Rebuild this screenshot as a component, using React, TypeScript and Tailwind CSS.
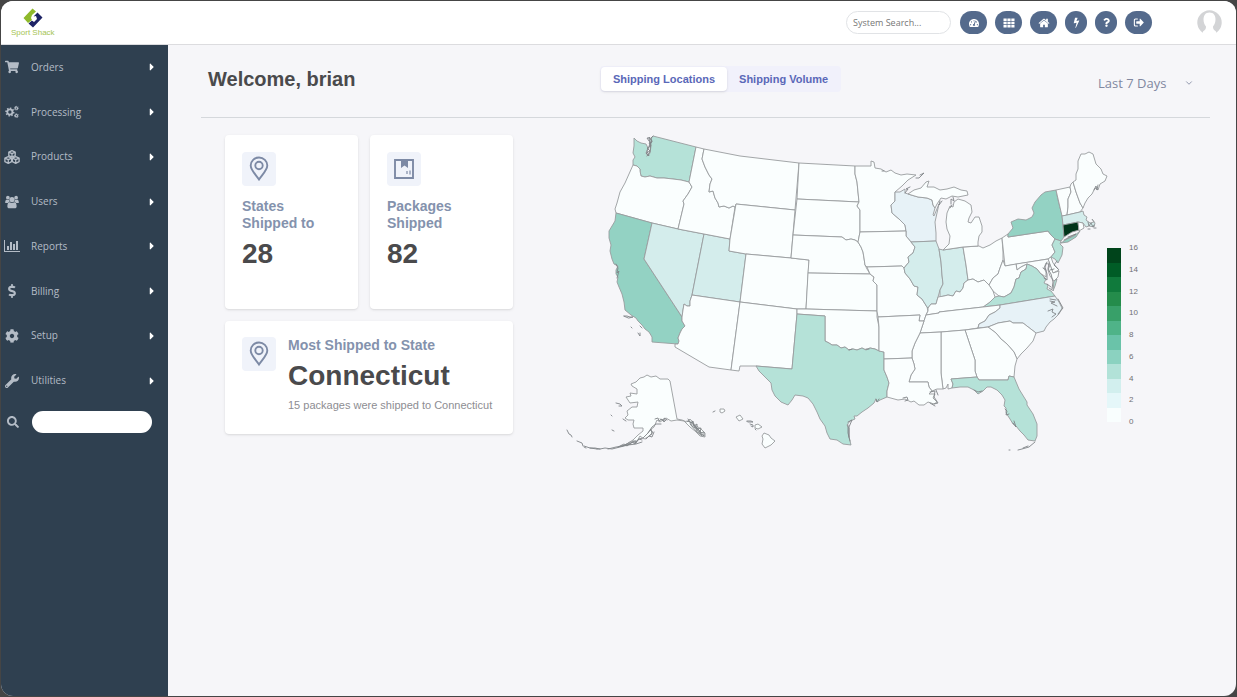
import { useState } from "react";
import type { ComponentType, ReactNode } from "react";
import {
  FaCaretRight,
  FaCog,
  FaDollarSign,
  FaQuestion,
  FaSearch,
  FaShoppingCart,
  FaTachometerAlt,
  FaWrench,
} from "react-icons/fa";
import { FiChevronDown } from "react-icons/fi";

interface IconProps {
  size?: number;
}

interface MenuItem {
  label: string;
  icon: ComponentType<IconProps>;
}

interface StateShape {
  id: string;
  fill?: string;
  points: string;
}

function Gear({ x, y, r, hole }: { x: number; y: number; r: number; hole: number }) {
  const ring = r - hole;
  return (
    <>
      <circle cx={x} cy={y} r={hole + ring / 2 - 0.2} strokeWidth={ring} />
      <circle cx={x} cy={y} r={r} strokeWidth={ring} pathLength={32} strokeDasharray="2 2" />
    </>
  );
}

function CogsIcon({ size = 14 }: IconProps) {
  return (
    <svg width={size} height={size} viewBox="0 0 16 16" fill="none" stroke="currentColor" aria-hidden="true">
      <Gear x={5.6} y={8} r={4.2} hole={2.1} />
      <Gear x={13} y={3.6} r={2.1} hole={0.9} />
      <Gear x={13} y={12.2} r={2.1} hole={0.9} />
    </svg>
  );
}

function CubesIcon({ size = 14 }: IconProps) {
  return (
    <svg width={size} height={size} viewBox="0 0 18 16" fill="none" stroke="currentColor" strokeWidth="1.500" strokeLinejoin="round" aria-hidden="true">
      <path d="M9 .9 12.600 2.500v4L9 8.200 5.400 6.500v-4zM5.400 2.500 9 4.200l3.600-1.700M9 4.200v4" />
      <path d="M4.800 7.700 8.600 9.300v4l-3.800 1.800L1 13.300v-4zM1 9.300 4.800 11l3.800-1.700M4.800 11v4" />
      <path d="M13.200 7.700 17 9.300v4l-3.800 1.800-3.800-1.800v-4zM9.400 9.300l3.800 1.700L17 9.300M13.200 11v4" />
    </svg>
  );
}

function UsersIcon({ size = 14 }: IconProps) {
  return (
    <svg width={size} height={size} viewBox="0 0 16 15" fill="currentColor" aria-hidden="true">
      <circle cx="3.300" cy="2.500" r="2.100" />
      <circle cx="12.700" cy="2.500" r="2.100" />
      <circle cx="8" cy="4.700" r="3" />
      <path d="M.2 8.300C.2 6 .8 4.800 1.900 4.800c.8.600 1.800.7 2.700.3.100 1 .4 1.700.9 2.300-1 .1-1.800.6-2.300 1.300H1C.5 8.700.2 8.600.2 8.300z" />
      <path d="M15.800 8.300c0-2.300-.6-3.500-1.700-3.500-.8.600-1.800.7-2.700.3-.1 1-.4 1.700-.9 2.300 1 .1 1.800.6 2.300 1.300H15c.5 0 .8-.1.800-.4z" />
      <path d="M2.700 12.500c0-2.900.9-4.700 2.700-4.700 1.600 1.200 3.600 1.200 5.200 0 1.800 0 2.700 1.800 2.700 4.700 0 1.300-.8 2-2 2H4.700c-1.200 0-2-.7-2-2z" />
    </svg>
  );
}

function BarChartIcon({ size = 14 }: IconProps) {
  return (
    <svg width={size} height={size} viewBox="0 0 2048 1792" fill="currentColor" aria-hidden="true">
      <path d="M640 896v512h-256v-512h256zm384-512v1024h-256v-1024h256zm1024 1152v128h-2048v-1536h128v1408h1920zm-640-896v768h-256v-768h256zm384-384v1152h-256v-1152h256z" />
    </svg>
  );
}

function GridIcon({ size = 12 }: IconProps) {
  return (
    <svg width={size} height={size} viewBox="0 0 12 12" fill="currentColor" aria-hidden="true">
      <path d="M.5 1.500h3.200v2.500H.5zM4.400 1.500h3.200v2.500H4.400zM8.300 1.500h3.200v2.500H8.300zM.5 4.800h3.200v2.500H.5zM4.400 4.800h3.200v2.500H4.400zM8.300 4.800h3.200v2.500H8.300zM.5 8.100h3.200v2.500H.5zM4.400 8.100h3.200v2.500H4.400zM8.300 8.100h3.200v2.500H8.300z" />
    </svg>
  );
}

function HomeIcon({ size = 11 }: IconProps) {
  return (
    <svg width={size} height={size} viewBox="0 0 1792 1792" fill="currentColor" aria-hidden="true">
      <path d="M1472 992v480q0 26-19 45t-45 19h-384v-384h-256v384h-384q-26 0-45-19t-19-45v-480q0-1 .5-3t.5-3l575-474 575 474q1 2 1 6zm223-69l-62 74q-8 9-21 11h-3q-13 0-21-7l-692-577-692 577q-12 8-24 7-13-2-21-11l-62-74q-8-10-7-23.500t11-21.500l719-599q32-26 76-26t76 26l244 204v-195q0-14 9-23t23-9h192q14 0 23 9t9 23v408l219 182q10 8 11 21.500t-7 23.500z" />
    </svg>
  );
}

function BoltIcon({ size = 11 }: IconProps) {
  return (
    <svg width={size} height={size} viewBox="0 0 1792 1792" fill="currentColor" aria-hidden="true">
      <path d="M1333 566q18 20 7 44l-540 1157q-13 25-42 25-4 0-14-2-17-5-25.500-19t-4.500-30l197-808-406 101q-4 1-12 1-18 0-31-11-18-15-13-39l201-825q4-16 14.500-25.500t25.500-9.500h328q19 0 32 12.500t13 29.500q0 8-5 18l-171 463 396-98q8-2 12-2 19 0 34 15z" />
    </svg>
  );
}

function SignOutIcon({ size = 11 }: IconProps) {
  return (
    <svg width={size} height={size} viewBox="0 0 12 12" fill="currentColor" aria-hidden="true">
      <path d="M4.800 2.200H2.600C1.900 2.200 1.500 2.600 1.500 3.300v5.400c0 .7.400 1.100 1.100 1.100h2.200" fill="none" stroke="currentColor" strokeWidth="1.200" strokeLinecap="round" />
      <path d="M4 4.600h3.300V2.200c0-.4.400-.5.700-.2l3.600 3.600c.2.200.2.600 0 .8L8 10c-.3.300-.7.200-.7-.2V7.400H4c-.3 0-.5-.2-.5-.5V5.100c0-.3.200-.5.500-.5z" />
    </svg>
  );
}

const MENU_ITEMS: MenuItem[] = [
  { label: "Orders", icon: FaShoppingCart },
  { label: "Processing", icon: CogsIcon },
  { label: "Products", icon: CubesIcon },
  { label: "Users", icon: UsersIcon },
  { label: "Reports", icon: BarChartIcon },
  { label: "Billing", icon: FaDollarSign },
  { label: "Setup", icon: FaCog },
  { label: "Utilities", icon: FaWrench },
];

const HEADER_BUTTONS = [
  { label: "Dashboard", icon: FaTachometerAlt, size: 10, width: "w-[27px]" },
  { label: "Apps", icon: GridIcon, size: 12, width: "w-[27px]" },
  { label: "Home", icon: HomeIcon, size: 12, width: "w-[27px]" },
  { label: "Quick actions", icon: BoltIcon, size: 11, width: "w-[22px]" },
  { label: "Help", icon: FaQuestion, size: 9, width: "w-[22px]" },
  { label: "Sign out", icon: SignOutIcon, size: 11, width: "w-[27px]" },
];

const TABS = ["Shipping Locations", "Shipping Volume"];

const LEGEND_LABELS = [16, 14, 12, 10, 8, 6, 4, 2, 0];
const LEGEND_STEPS = [
  "bg-[#00441b]",
  "bg-[#005c26]",
  "bg-[#107a3c]",
  "bg-[#248c4b]",
  "bg-[#38a069]",
  "bg-[#4fb388]",
  "bg-[#6ac3a9]",
  "bg-[#8bd2c0]",
  "bg-[#b2e2d8]",
  "bg-[#d2efee]",
  "bg-[#e5f7f9]",
  "bg-[#f9fefe]",
];

// fill by shipped volume
const NONE = "#fafefe";
const FEW = "#e7f2f7";
const LOW = "#d4edec";
const MID = "#b5e2d8";
const HIGH = "#93d2c3";
const TOP = "#00351a";

const STATES: StateShape[] = [
  { id: "WA", fill: MID, points: "634,138 637,141 641,143 646,144 648,148 646,153 648,156 650,153 651,146 650,140 653,136 696,147 689,182 681,180 673,179 664,178 657,178 650,176 645,177 641,176 640,171 640,169 637,166 633,165 633,160 635,157 633,153 634,146" },
  { id: "OR", points: "633,165 637,166 640,169 640,171 641,176 645,177 650,176 657,178 664,178 673,179 681,180 689,182 692,187 688,194 683,201 684,204 678,229 652,223 616,213 615,209 617,203 620,192 625,183 629,174" },
  { id: "CA", fill: HIGH, points: "616,213 652,223 644,259 682,317 682,321 685,326 682,329 680,333 678,338 679,341 678,344 652,342 652,337 649,332 645,329 642,325 638,321 636,318 631,315 625,310 624,302 622,294 619,287 617,282 618,277 616,274 616,270 618,266 614,264 612,259 610,251 611,245 609,238 609,231 612,226 615,221" },
  { id: "NV", fill: LOW, points: "652,223 678,229 704,234 692,295 690,301 690,306 687,306 684,304 683,310 682,317 644,259" },
  { id: "UT", fill: LOW, points: "704,234 730,239 729,251 746,254 740,302 692,295" },
  { id: "AZ", points: "692,295 740,302 731,370 709,367 675,347 675,344 678,344 679,341 678,338 680,333 682,329 685,326 682,321 682,317 683,310 684,304 687,306 690,306 690,301" },
  { id: "ID", points: "696,147 704,149 702,159 705,167 709,175 712,179 710,184 709,192 713,191 715,198 718,203 719,207 724,206 729,208 733,206 735,207 730,239 704,234 678,229 684,204 683,201 688,194 692,187 689,182" },
  { id: "MT", points: "704,149 740,156 799,163 795,210 736,204 735,207 733,206 729,208 724,206 719,207 718,203 715,198 713,191 709,192 710,184 712,179 709,175 705,167 702,159" },
  { id: "WY", points: "736,204 795,210 791,258 746,254 729,251 730,239" },
  { id: "CO", points: "746,254 791,258 809,260 806,309 797,309 740,302" },
  { id: "NM", points: "740,302 797,309 797,314 792,369 756,366 740,366 739,371 731,370" },
  { id: "ND", points: "799,163 855,166 855,174 857,182 858,192 859,202 797,199" },
  { id: "SD", points: "797,199 859,202 857,206 860,210 860,232 859,237 858,242 855,240 851,239 846,240 842,237 793,235" },
  { id: "NE", points: "793,235 842,237 846,240 851,239 855,240 858,242 861,247 863,252 864,258 865,265 867,269 870,274 808,273 809,260 791,258" },
  { id: "KS", points: "808,273 870,274 874,277 873,281 877,285 877,311 806,309" },
  { id: "OK", points: "797,309 806,309 877,311 877,317 879,327 879,351 875,349 870,348 866,350 862,348 857,350 853,349 849,350 845,347 841,348 837,345 832,345 829,343 825,341 825,316 797,314" },
  { id: "TX", fill: MID, points: "797,314 825,316 825,341 829,343 832,345 837,345 841,348 845,347 849,350 853,349 857,350 862,348 866,350 870,348 875,349 879,351 884,352 884,370 887,377 889,383 887,391 887,397 880,400 877,402 876,399 874,403 868,408 862,412 857,416 854,416 855,419 850,421 847,425 849,428 849,437 851,445 843,444 837,440 830,439 827,433 825,426 820,419 817,412 813,404 808,398 803,396 795,395 792,400 788,405 781,402 775,396 772,390 771,383 764,376 759,371 756,366 792,369" },
  { id: "MN", points: "855,166 871,166 871,161 874,162 875,168 881,169 886,172 891,170 895,173 901,175 907,174 916,175 908,180 902,186 895,192 895,201 891,205 892,213 899,219 905,225 906,231 860,232 860,210 857,206 859,202 858,192 857,182 855,174" },
  { id: "WI", fill: FEW, points: "895,192 900,192 905,189 905,193 908,194 918,197 927,198 932,200 933,205 935,208 933,215 934,216 939,204 937,213 935,222 936,233 936,241 911,242 906,236 906,231 905,225 899,219 892,213 891,205 895,201" },
  { id: "IA", points: "860,232 906,231 906,236 911,242 915,247 913,253 908,257 909,262 904,268 902,266 867,267 865,265 864,258 863,252 861,247 858,242 859,237" },
  { id: "MO", points: "867,267 902,266 904,268 905,273 910,279 914,286 918,287 917,295 922,299 927,307 928,311 926,315 924,321 919,321 920,315 878,317 877,311 877,285 873,281 874,277 870,274" },
  { id: "IL", fill: LOW, points: "911,242 936,241 939,249 941,262 942,275 943,284 940,290 938,297 936,304 931,304 928,308 927,307 922,299 917,295 918,287 914,286 910,279 905,273 904,268 909,262 908,257 913,253 915,247" },
  { id: "IN", fill: LOW, points: "939,249 943,250 963,247 966,265 968,280 964,283 963,288 960,292 956,291 953,296 948,295 944,296 940,297 940,290 943,284 942,275 941,262" },
  { id: "OH", points: "963,247 979,246 983,248 990,245 996,241 1002,238 1003,252 1003,260 1000,268 998,274 993,278 989,285 984,280 978,282 973,279 968,280 966,265" },
  { id: "MI", points: "943,250 949,244 950,236 947,229 946,222 947,213 950,206 953,207 954,202 958,199 965,201 971,205 972,212 969,218 968,222 971,223 975,217 979,217 982,226 982,232 979,236 978,242 978,246 963,247" },
  { id: "MI-upper", points: "908,194 914,190 921,188 926,182 929,181 927,187 934,187 940,190 947,189 954,187 961,190 967,191 968,195 958,197 952,196 946,199 941,198 937,204 935,208 933,205 932,200 927,198 918,197" },
  { id: "PA", points: "1002,238 1008,234 1008,237 1048,231 1051,235 1055,239 1052,245 1055,252 1051,257 1048,259 1005,266" },
  { id: "NY", fill: HIGH, points: "1008,237 1008,234 1013,228 1011,222 1018,219 1026,220 1032,217 1034,213 1032,208 1035,202 1041,195 1045,192 1056,190 1058,200 1062,215 1063,225 1064,237 1061,241 1055,239 1051,235 1048,231" },
  { id: "NY-island", fill: HIGH, points: "1061,243 1067,239 1074,236 1080,231 1076,237 1068,242" },
  { id: "VT", points: "1056,190 1070,187 1071,192 1068,199 1068,207 1067,215 1062,216" },
  { id: "NH", points: "1070,187 1071,184 1073,182 1076,192 1080,203 1083,208 1080,212 1067,215 1068,207 1068,199 1071,192" },
  { id: "ME", points: "1073,182 1076,180 1076,174 1078,169 1078,161 1081,154 1085,154 1089,152 1093,154 1096,164 1101,169 1103,174 1107,176 1105,181 1100,184 1098,190 1095,188 1092,194 1088,198 1085,203 1083,208 1080,203 1076,192" },
  { id: "MA", fill: LOW, points: "1062,216 1067,215 1080,212 1083,211 1084,215 1087,217 1086,220 1090,223 1094,222 1092,219 1095,223 1094,227 1089,226 1086,227 1083,223 1078,222 1063,225" },
  { id: "CT", fill: TOP, points: "1063,225 1078,222 1079,230 1072,232 1064,237" },
  { id: "RI", points: "1078,222 1083,223 1084,228 1079,231" },
  { id: "NJ", fill: MID, points: "1055,239 1061,241 1060,244 1063,247 1062,255 1058,263 1055,259 1051,257 1055,252 1052,245" },
  { id: "DE", points: "1048,259 1051,257 1053,263 1059,270 1053,273" },
  { id: "MD", points: "1016,264 1048,259 1053,273 1059,271 1058,277 1054,281 1050,276 1048,270 1050,265 1046,263 1044,268 1046,272 1046,277 1040,273 1037,269 1032,266 1027,264 1021,267 1017,270" },
  { id: "WV", points: "1003,260 1005,266 1016,264 1017,270 1021,267 1027,264 1026,269 1021,272 1019,278 1016,279 1014,287 1011,293 1004,297 999,296 993,291 989,285 993,278 998,274 1000,268" },
  { id: "VA", fill: MID, points: "1027,264 1032,266 1037,269 1040,273 1046,279 1044,283 1048,285 1047,289 1051,291 1055,296 1000,305 983,307 990,302 995,297 999,296 1004,297 1011,293 1014,287 1016,279 1019,278 1021,272 1026,269" },
  { id: "VA-shore", fill: MID, points: "1054,281 1057,279 1055,286 1053,291" },
  { id: "KY", points: "928,308 931,304 936,304 938,297 944,296 948,295 953,296 956,291 960,292 963,288 964,283 968,280 973,279 978,282 984,280 989,285 993,291 995,297 990,302 983,307 939,312 939,313 926,315 928,311" },
  { id: "TN", points: "926,315 939,313 939,312 983,307 1000,305 1000,308 995,312 989,315 985,321 979,324 978,328 965,330 941,332 920,333 922,327 924,321" },
  { id: "NC", fill: FEW, points: "1000,305 1055,296 1059,302 1062,308 1059,314 1054,319 1050,322 1046,327 1044,331 1036,333 1023,323 1013,323 1010,321 998,323 988,327 978,328 979,324 985,321 989,315 995,312 1000,308" },
  { id: "SC", points: "988,327 998,323 1010,321 1013,323 1023,323 1036,333 1033,341 1027,348 1021,354 1017,359 1014,352 1007,344 1001,339 996,333" },
  { id: "GA", points: "965,330 988,327 996,333 1001,339 1007,344 1014,352 1017,359 1015,366 1014,377 1009,376 1008,380 979,380 977,377 975,371 975,360" },
  { id: "AL", points: "941,332 965,330 975,360 975,371 977,377 951,379 953,384 952,388 948,389 948,384 946,388 943,389 941,373" },
  { id: "MS", points: "920,333 941,332 941,373 943,389 937,389 932,391 929,387 928,382 909,382 911,375 915,369 914,364 912,358 912,351 915,343" },
  { id: "FL", fill: MID, points: "951,379 977,377 979,380 1008,380 1009,376 1014,377 1019,389 1027,402 1027,405 1033,414 1037,424 1037,436 1035,441 1028,440 1024,435 1020,431 1016,426 1013,424 1010,419 1006,413 1006,408 1004,406 1005,400 1002,395 997,390 991,387 987,387 983,391 978,394 974,390 968,387 960,387 952,388 953,384" },
  { id: "AR", points: "878,317 920,315 919,321 924,321 922,327 920,333 915,343 912,351 912,358 884,359 884,352 879,351 879,327" },
  { id: "LA", points: "884,359 912,358 914,364 915,369 911,375 909,382 928,382 929,387 932,391 929,394 935,394 933,398 937,402 934,404 928,402 924,405 919,405 914,401 911,402 905,399 898,400 887,397 887,391 889,383 887,377 884,370" },
  { id: "AK", points: "640,378 644,377 647,375 651,377 656,376 660,379 668,379 670,381 677,419 682,420 687,422 690,419 695,425 701,429 705,433 705,437 700,436 695,431 690,427 684,421 677,420 671,421 666,418 660,422 657,420 654,427 650,430 653,432 648,437 644,439 640,436 637,441 630,442 625,445 633,440 638,435 643,431 643,428 638,428 634,428 633,424 634,420 628,420 625,418 628,415 627,411 632,407 637,407 638,402 630,403 626,397 631,396 630,393 637,394 637,389 632,386 631,384 636,382" },
  { id: "HI", points: "764,433 769,435 771,438 775,441 771,445 765,448 762,444 763,439 762,436" },
  { id: "HI-2", points: "720,409 724,409 725,411 722,413 720,412" },
  { id: "HI-3", points: "736,417 740,415 743,419 739,421" },
  { id: "HI-4", points: "755,425 758,424 762,427 758,429 755,428" },
];

// islands, inlets and broken shoreline
const COASTLINES = [
  "M653 136l-2 2 1 4-3 1 2 3-4 2 3 3-4 2 3 3-2-5 3-6-1-8 3 4-3 5M650 138l-3 0 2 3M651 142l-1 10-3 4",
  "M616 264l2 4-1 5 2-2-2 7",
  "M624 316l3 0 3 1 3 0-4 1zM640 326l2 2M631 327l1 1M638 333l2 3 0-3",
  "M567 430l2 4 2 1 1 2M577 441l5 2 1 3M584 446l6 2 5 0 5 1 5-1 7 1 8-2 8-2 8-1 6-2M608 449l8-2 7-1 6-3M590 448l7 1M629 444l4-2 2 1 4-4 3 1M646 439l3-3 3 1 2-5M616 403l4 1 2 2-3 0M623 419l3 2M611 415l1 1M612 430l2 1M655 419l3-1 1 3 3-2 2 3 2-2",
  "M688 419l3 4 2-2 1 5 3-2 0 5 4-1-1 5 4-1 0 4-5-3-2-4-5-3-2-4-3-1M693 424l6 6 5 6M690 424l7 8 5 4M692 421l2 5 4 3 3 5M689 421l6 5 2 5",
  "M618 447l6-3 3 2 5-4 3 2 4-5 4-1 5-5 4-6 4-3 5 0M621 446l5-1 5-1M648 433l3-4 1 5-3 2M633 441l3 0 0 2M660 419l4 2 0-3 3 2M584 447l2 1M597 449l3 0",
  "M713 412l2-1M747 421l4 0 2 1-5 0zM750 424l3 1 0 2-2-1M755 429l1 1",
  "M916 178l3 0 5-5-4 2M905 193l3-4-2 0 4-2M942 201l-3 4 1-4M951 204l0-5 3 2-1-4M950 208l2-3",
  "M1094 190l2-4 1 4 1-5M1088 222l1 4 2-3 2 4 1-2M1088 229l2 0M1094 228l2 0",
  "M1049 263l-1 6 3 5 2 8-1 7M1047 262l-2 5 2 7 0 6-3-2M1050 270l4-1M1057 261l-3 4 4 4M1047 284l4 3M1049 288l3 2M1043 268l3 2",
  "M1050 301l5 1-4 1 6 3M1048 311l5-2-1 3 4 2-4 3M1058 299l5 9-5 6M1050 299l6 1",
  "M930 392l5-1-1 6 4 6-4 1M903 398l4-1 1 3-3 1M930 403l5 3M936 390l2 5",
  "M1005 409l2 2-1 4 3-1M1013 423l3 4-2-6M1018 450l4-1 7-2 6-5M1009 450l1 0M1023 448l5-2",
  "M848 422l4-2-3 7 0 10M876 399l1 3 2-3M848 425l0 8 2 8",
  "M974 390l4 2 4-1M882 171l2 0M866 349l3 0M849 350l3-1M1064 240l6-3 6-3-8 3",
];

function Logo() {
  return (
    <div className="flex flex-col items-center">
      <svg width="20" height="20" viewBox="0 0 20 20" aria-hidden="true">
        <path d="M9.500.5 13 3.500 9 7l-1 3 1 2-4 3-4.500-5z" fill="#8fb92b" />
        <path d="M14.500 4.500 19.500 9.500 10 19.500 5.500 15.500 9 12.500l2 1.500 3-3-1-3-2.500.5z" fill="#1d2365" />
        <path d="M12 5.500 9.500 8.500 12 10l-3 2.500" fill="none" stroke="#fff" strokeWidth="1" />
      </svg>
      <span className="text-[8px] leading-[10px] text-[#a5c453]">Sport Shack</span>
    </div>
  );
}

function Header() {
  return (
    <header className="flex h-[44px] items-center border-b border-[#dcdcdf] bg-white pr-[14px] pl-[10px]">
      <Logo />
      <input
        type="text"
        aria-label="System Search"
        placeholder="System Search..."
        className="ml-auto h-[23px] w-[105px] rounded-full border border-[#e1e3e6] bg-white px-[6px] font-['Open_Sans',sans-serif] text-[9px] text-gray-600 placeholder:text-[#777] focus:outline-none"
      />
      <div className="ml-[9px] flex gap-2">
        {HEADER_BUTTONS.map(({ label, icon: Icon, size, width }) => (
          <button
            key={label}
            type="button"
            aria-label={label}
            className={`${width} flex h-[23px] items-center justify-center rounded-full bg-[#546a8c] text-white`}
          >
            <Icon size={size} />
          </button>
        ))}
      </div>
      <button type="button" aria-label="Account" className="ml-[45px]">
        <svg width="25" height="25" viewBox="0 0 25 25" aria-hidden="true">
          <path d="M5.500 22.500a12.200 12.200 0 1 1 14 0z" fill="#d3d4d6" />
          <path
            d="M12.500 2.500c4 0 6 2.800 6 7 0 3.500-1.300 5.600-2.500 7 0 2 .5 3.500 3 5v3h-13v-3c2.500-1.500 3-3 3-5-1.200-1.400-2.500-3.500-2.500-7 0-4.200 2-7 6-7z"
            fill="#fff"
          />
        </svg>
      </button>
    </header>
  );
}

function Sidebar() {
  return (
    <aside className="w-[167px] shrink-0 bg-[#2f4050] font-['Open_Sans',sans-serif] text-[#b4bcc6]">
      <nav className="flex h-[358px] flex-col">
        {MENU_ITEMS.map(({ label, icon: Icon }) => (
          <a key={label} href="#" className="flex flex-1 items-center pr-[10px] pl-[3px] text-[10px]">
            <span className="mr-[11px] flex w-4 justify-center">
              <Icon size={label === "Products" || label === "Reports" ? 16 : 14} />
            </span>
            {label}
            <FaCaretRight size={12} className="ml-auto text-white" />
          </a>
        ))}
      </nav>
      <label className="mt-2 flex items-center pl-[6px]">
        <FaSearch size={12} />
        <input
          type="text"
          aria-label="Search menu"
          className="ml-[13px] h-[22px] w-[120px] rounded-full bg-white px-3 text-[10px] text-gray-700 focus:outline-none"
        />
      </label>
    </aside>
  );
}

function PinIcon() {
  return (
    <svg width="20" height="26" viewBox="0 0 20 26" fill="none" stroke="#7d8aa5" strokeWidth="1.900" aria-hidden="true">
      <path d="M10 23.500C7 19 1.700 14 1.700 9.500a8.300 8 0 0 1 16.600 0C18.300 14 13 19 10 23.500z" />
      <circle cx="10" cy="9.500" r="3.700" />
    </svg>
  );
}

function PackageIcon() {
  return (
    <svg width="20" height="20" viewBox="0 0 20 20" fill="none" stroke="#7d8aa5" strokeWidth="1.900" aria-hidden="true">
      <path d="M1 1h18v18H1z" />
      <path d="M7 1h7v8l-3.500-2.500L7 9z" fill="#7d8aa5" stroke="none" />
      <path d="M13 12v3M16 11.500v4" strokeWidth="1.200" />
    </svg>
  );
}

function StatCard({ title, value, children }: { title: string; value: number; children: ReactNode }) {
  return (
    <div className="h-[174px] rounded-sm bg-white p-[17px] shadow-sm">
      <div className="flex size-[34px] items-center justify-center rounded-sm bg-[#f0f3fa]">
        {children}
      </div>
      <h2 className="mt-[12px] w-20 text-[14px] leading-[17px] font-bold text-[#8492ad]">{title}</h2>
      <p className="mt-[5px] text-[28px] leading-[34px] font-bold text-[#4a4a4c]">{value}</p>
    </div>
  );
}

function ShippingMap() {
  return (
    <svg viewBox="560 135 547 320" className="min-w-0 flex-1 overflow-visible" role="img" aria-label="Shipping locations by state">
      <g stroke="#989c9e" strokeWidth="0.900" strokeLinejoin="round">
        {STATES.map((state) => (
          <polygon key={state.id} points={state.points} fill={state.fill ?? NONE} />
        ))}
      </g>
      <g fill="none" stroke="#808488" strokeWidth="0.900" strokeLinecap="round" strokeLinejoin="round">
        {COASTLINES.map((d) => (
          <path key={d} d={d} />
        ))}
      </g>
    </svg>
  );
}

function Legend() {
  return (
    <div className="mt-[113px] flex w-8 gap-2">
      <div className="flex h-[174px] w-[14px] flex-col">
        {LEGEND_STEPS.map((step) => (
          <div key={step} className={`${step} flex-1`} />
        ))}
      </div>
      <div className="-my-[5px] flex h-[184px] flex-col justify-between text-[8px] leading-[10px] text-[#6f6f73]">
        {LEGEND_LABELS.map((label) => (
          <span key={label}>{label}</span>
        ))}
      </div>
    </div>
  );
}

export default function App() {
  const [activeTab, setActiveTab] = useState<string>(TABS[0]);
  const [range, setRange] = useState<string>("Last 7 Days");

  return (
    <div className="flex min-h-screen bg-[#454545] p-px font-['Liberation_Sans',Arial,sans-serif]">
      <div className="flex flex-1 flex-col overflow-hidden rounded-xl bg-[#f6f6f9]">
        <Header />
        <div className="flex flex-1">
          <Sidebar />
          <main className="min-w-0 flex-1 pr-[26px] pl-[33px]">
            <div className="flex h-[73px] items-start border-b border-[#d5d8dc] pt-[21px]">
              <h1 className="w-[399px] pl-[7px] text-[20px] leading-[26px] font-bold text-[#4a4a4c]">
                Welcome, brian
              </h1>
              <div role="tablist" className="flex rounded bg-[#f1f1fb] p-px">
                {TABS.map((tab) => (
                  <button
                    key={tab}
                    type="button"
                    role="tab"
                    aria-selected={activeTab === tab}
                    onClick={() => setActiveTab(tab)}
                    className={`${
                      activeTab === tab ? "bg-white shadow-sm" : ""
                    } h-6 rounded px-3 text-[11px] font-bold whitespace-nowrap text-[#5a68b8]`}
                  >
                    {tab}
                  </button>
                ))}
              </div>
              <div className="relative ml-auto flex items-center pt-1 pr-4">
                <select
                  aria-label="Date range"
                  value={range}
                  onChange={(e) => setRange(e.target.value)}
                  className="w-24 appearance-none bg-transparent font-['Open_Sans',sans-serif] text-[13px] leading-[26px] text-[#8188a0] focus:outline-none"
                >
                  <option>Last 7 Days</option>
                  <option>Last 30 Days</option>
                  <option>Last 90 Days</option>
                </select>
                <FiChevronDown size={10} className="pointer-events-none absolute right-4 text-[#8188a0]" />
              </div>
            </div>
            <div className="flex items-start pt-[17px] pr-[71px] pl-6">
              <section className="mr-[47px] flex w-[288px] shrink-0 flex-col gap-3">
                <div className="grid grid-cols-[133px_1fr] gap-3">
                  <StatCard title="States Shipped to" value={28}>
                    <PinIcon />
                  </StatCard>
                  <StatCard title="Packages Shipped" value={82}>
                    <PackageIcon />
                  </StatCard>
                </div>
                <div className="flex h-[113px] gap-3 rounded-sm bg-white pt-4 pl-[17px] shadow-sm">
                  <div className="flex size-[34px] shrink-0 items-center justify-center rounded-sm bg-[#f0f3fa]">
                    <PinIcon />
                  </div>
                  <div className="whitespace-nowrap">
                    <h2 className="text-[14px] leading-[17px] font-bold text-[#8492ad]">Most Shipped to State</h2>
                    <p className="mt-[5px] text-[28px] leading-[34px] font-bold text-[#4a4a4c]">Connecticut</p>
                    <p className="mt-[5px] text-[11px] leading-[14px] text-[#8d8d92]">
                      15 packages were shipped to Connecticut
                    </p>
                  </div>
                </div>
              </section>
              <ShippingMap />
              <Legend />
            </div>
          </main>
        </div>
      </div>
    </div>
  );
}
